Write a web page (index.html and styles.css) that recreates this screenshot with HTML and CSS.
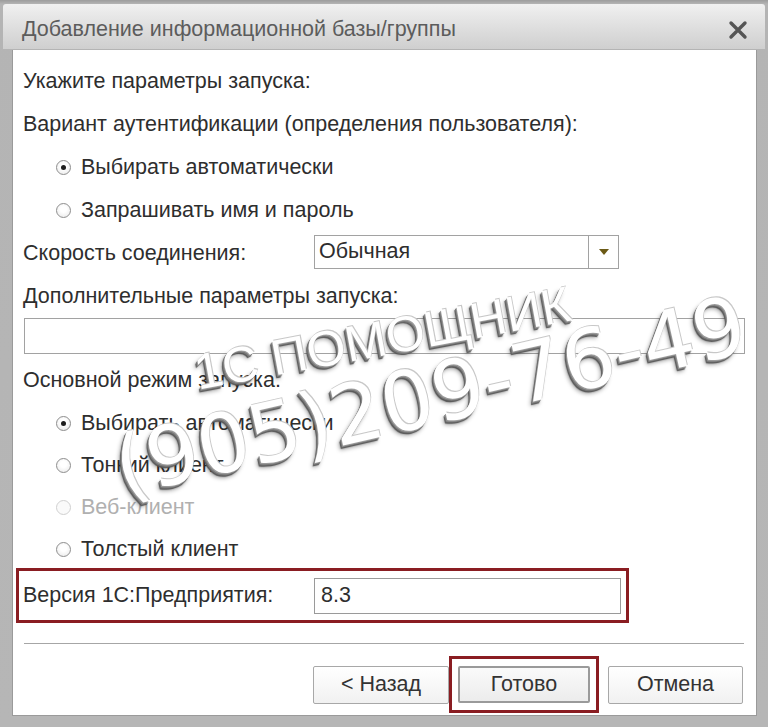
FILE: index.html
```html
<!DOCTYPE html>
<html lang="ru">

<head>
    <meta charset="UTF-8">
    <meta name="viewport" content="width=device-width, initial-scale=1.0">
    <title>Добавление информационной базы/группы</title>
    <link rel="stylesheet" href="styles.css">
</head>

<body>
    <div class="window">
        <div class="titlebar">
            <span class="title">Добавление информационной базы/группы</span>
            <svg class="close" width="20" height="20" viewBox="0 0 20 20">
                <path d="M3 3 L17 17 M17 3 L3 17" stroke="#555" stroke-width="3.4" stroke-linecap="round" />
            </svg>
        </div>

        <div class="content">
            <div class="row">Укажите параметры запуска:</div>
            <div class="row">Вариант аутентификации (определения пользователя):</div>
            <div class="row radio-row"><span class="radio checked"></span>Выбирать автоматически</div>
            <div class="row radio-row"><span class="radio"></span>Запрашивать имя и пароль</div>

            <div class="row field-row">
                <span class="field-label">Скорость соединения:</span>
                <div class="combo">
                    <span class="combo-value">Обычная</span>
                    <span class="combo-btn">
                        <svg width="10" height="6" viewBox="0 0 10 6">
                            <path d="M0 0 L10 0 L5 6 Z" fill="#6b5a16" />
                        </svg>
                    </span>
                </div>
            </div>

            <div class="row">Дополнительные параметры запуска:</div>
            <div class="text-input wide"></div>

            <div class="row mode-title">Основной режим запуска:</div>
            <div class="row radio-row short"><span class="radio checked"></span>Выбирать автоматически</div>
            <div class="row radio-row short"><span class="radio"></span>Тонкий клиент</div>
            <div class="row radio-row short disabled"><span class="radio"></span>Веб-клиент</div>
            <div class="row radio-row short"><span class="radio"></span>Толстый клиент</div>

            <div class="version-row">
                <span class="field-label">Версия 1С:Предприятия:</span>
                <div class="text-input version">8.3</div>
            </div>

            <div class="separator"></div>

            <div class="buttons">
                <button class="btn">&lt; Назад</button>
                <div class="highlight-btn">
                    <button class="btn default">Готово</button>
                </div>
                <button class="btn cancel">Отмена</button>
            </div>

            <!-- водяной знак поверх формы -->
            <div class="watermark line1">1С ПОМОЩНИК</div>
            <div class="watermark line2">(905)209-76-49</div>
        </div>
    </div>
</body>

</html>
```

FILE: styles.css
```css
html,
body {
    margin: 0;
    padding: 0;
}

body {
    width: 768px;
    height: 727px;
    overflow: hidden;
    background-color: #a9a9a9;
    font-family: "Liberation Sans", Arial, sans-serif;
}

.window {
    box-sizing: border-box;
    height: 727px;
    padding: 4px 3px 11px 3px;
    display: flex;
    flex-direction: column;
    background: linear-gradient(to bottom, #9c9c9c 0, #b4b4b4 4px, #b6b6b6 100%);
}

.titlebar {
    height: 45px;
    flex-shrink: 0;
    display: flex;
    align-items: center;
    justify-content: space-between;
    box-sizing: border-box;
    padding: 6px 17px 0 19px;
    background: linear-gradient(to bottom, #f0f0f0, #dcdcdc 60%, #cfcfcf);
    border-radius: 3px 3px 0 0;
}

.title {
    font-size: 21.5px;
    color: #5c5c5c;
}

.close {
    display: block;
}

.content {
    position: relative;
    flex: 1;
    margin: 1px 8px 0 9px;
    padding: 10px 11px 0 10px;
    background-color: #fff;
    border: 1px solid #9a9a9a;
    border-top: none;
    overflow: hidden;
}

.row {
    height: 43px;
    display: flex;
    align-items: center;
    font-size: 21.5px;
    color: #2e2e2e;
    white-space: nowrap;
}

.row.short {
    height: 42px;
}

.radio-row {
    padding-left: 33px;
}

.radio {
    box-sizing: border-box;
    width: 15px;
    height: 15px;
    margin-right: 10px;
    border-radius: 50%;
    border: 1px solid #8e8e8e;
    background: radial-gradient(circle at 50% 40%, #ffffff 30%, #e6e6e6 100%);
    display: flex;
    align-items: center;
    justify-content: center;
}

.radio.checked::after {
    content: "";
    width: 5px;
    height: 5px;
    border-radius: 50%;
    background-color: #1e1e1e;
}

.disabled {
    color: #b0b0b0;
}

.disabled .radio {
    border-color: #d0d0d0;
    background: #fafafa;
}

.field-label {
    width: 291px;
    flex-shrink: 0;
}

.combo {
    box-sizing: border-box;
    width: 305px;
    height: 34px;
    margin-top: -4px;
    display: flex;
    border: 1px solid #a2a2a2;
    background-color: #fff;
}

.combo-value {
    flex: 1;
    display: flex;
    align-items: center;
    padding-left: 4px;
}

.combo-btn {
    width: 29px;
    border-left: 1px solid #a2a2a2;
    display: flex;
    align-items: center;
    justify-content: center;
}

.text-input {
    box-sizing: border-box;
    height: 36px;
    border: 1px solid #a2a2a2;
    background-color: #fff;
}

.text-input.wide {
    margin-left: 1px;
}

.mode-title {
    margin-top: 5px;
}

.version-row {
    box-sizing: border-box;
    width: 613px;
    height: 55px;
    margin: -2px 0 0 -7px;
    padding-left: 4px;
    display: flex;
    align-items: center;
    border: 3px solid #8a1d22;
    font-size: 21.5px;
    color: #2e2e2e;
}

.text-input.version {
    width: 307px;
    display: flex;
    align-items: center;
    padding-left: 6px;
    border-color: #9a9a9a;
}

.separator {
    height: 1px;
    margin: 20px 1px 0 1px;
    background-color: #a6a6a6;
}

.buttons {
    margin-top: 12px;
    display: flex;
    justify-content: flex-end;
    align-items: center;
    padding-right: 2px;
}

.btn {
    box-sizing: border-box;
    width: 136px;
    height: 38px;
    border: 1px solid #a8a8a8;
    border-radius: 2px;
    background: linear-gradient(to bottom, #ffffff, #f1f1f1);
    font-family: "Liberation Sans", Arial, sans-serif;
    font-size: 21.5px;
    color: #333;
    padding: 0;
}

.highlight-btn {
    box-sizing: border-box;
    border: 3px solid #8a1d22;
    padding: 7px 6px;
}

.btn.default {
    width: 132px;
    height: 37px;
    border: 2px solid #9a9a9a;
    background: linear-gradient(to bottom, #fafafa, #ececec);
}

.btn.cancel {
    width: 135px;
    margin-left: 9px;
}

.watermark {
    position: absolute;
    white-space: nowrap;
    color: #fff;
    line-height: 1;
    pointer-events: none;
    transform-origin: left center;
    text-shadow: 1px -1px 0 #c8c8c8, -1px 1px 0 #9a9a9a, -2px 2px 0 #777, -3px 3px 1px #555, -4px 4px 4px rgba(0, 0, 0, 0.35);
}

.watermark.line1 {
    left: 182px;
    top: 298px;
    font-family: "Liberation Sans", Arial, sans-serif;
    font-size: 50px;
    transform: rotate(-10.5deg);
}

.watermark.line2 {
    left: 103px;
    top: 378px;
    font-family: "DejaVu Sans", sans-serif;
    font-size: 82px;
    transform: rotate(-13deg);
}
```
